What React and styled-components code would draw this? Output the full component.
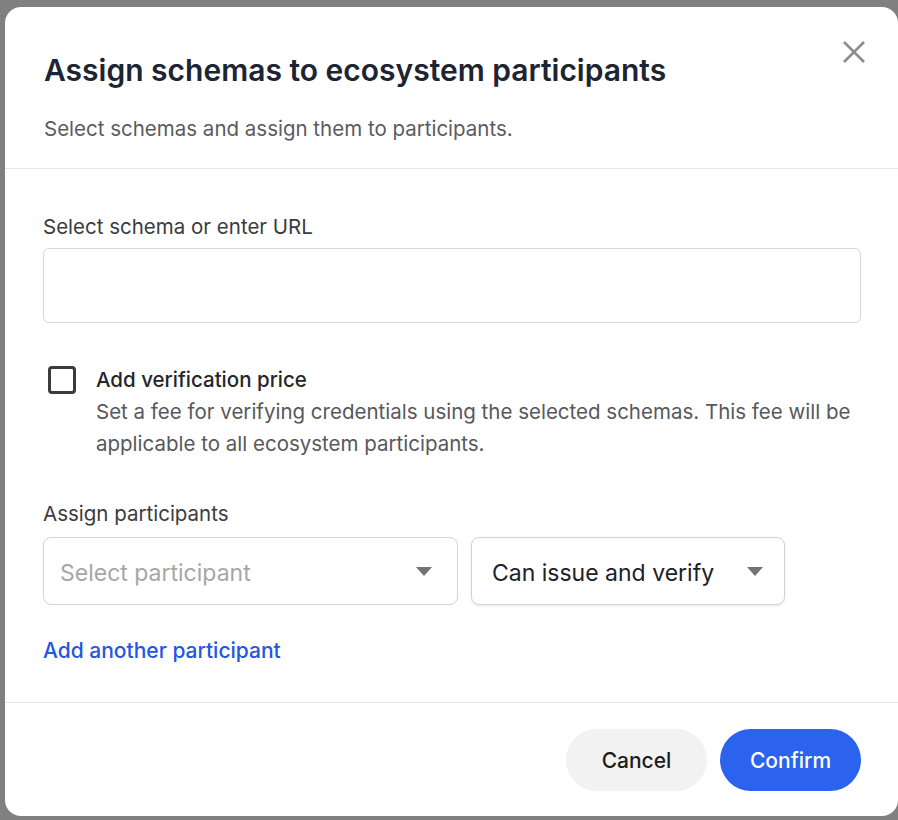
import React from "react";
import styled, { createGlobalStyle } from "styled-components";

const GlobalStyle = createGlobalStyle`
  html, body {
    margin: 0;
    padding: 0;
    background: #808080;
    font-family: Inter, "Noto Sans", sans-serif;
  }
  * {
    box-sizing: border-box;
  }
`;

const Modal = styled.div`
  position: relative;
  margin: 7px 0 0 5px;
  width: 893px;
  height: 809px;
  background: #ffffff;
  border-radius: 16px;
  display: flex;
  flex-direction: column;
  overflow: hidden;
`;

const Header = styled.div`
  padding: 45px 39px 25px;
  border-bottom: 1px solid #e6e6e6;
`;

const Title = styled.h2`
  margin: 0;
  font-size: 30px;
  line-height: 36px;
  font-weight: 600;
  color: #1d2432;
`;

const Subtitle = styled.p`
  margin: 27px 0 0;
  font-size: 20.5px;
  line-height: 28px;
  color: #5b5b5f;
`;

const CloseButton = styled.button`
  position: absolute;
  top: 33px;
  right: 32px;
  width: 24px;
  height: 24px;
  padding: 0;
  border: none;
  background: none;
  cursor: pointer;

  svg {
    display: block;
  }
`;

const Body = styled.div`
  flex: 1;
  padding: 44px 37px 0 38px;
`;

const Label = styled.div`
  font-size: 20.5px;
  line-height: 28px;
  color: #3b3b3f;
  margin-bottom: ${(p) => p.$gap}px;
`;

const TextInput = styled.input`
  display: block;
  width: 818px;
  height: 75px;
  border: 1px solid #d6d6d6;
  border-radius: 6px;
  padding: 0 16px;
  font: inherit;
  font-size: 20px;
  outline: none;
`;

const CheckRow = styled.div`
  display: flex;
  align-items: flex-start;
  gap: 20px;
  margin: 41px 0 40px 5px;
`;

const Checkbox = styled.span`
  flex: none;
  width: 28px;
  height: 28px;
  margin-top: 2px;
  border: 3px solid #3a3a40;
  border-radius: 4px;
`;

const CheckText = styled.div`
  font-size: 20.5px;
  line-height: 32px;

  strong {
    display: block;
    font-weight: 500;
    color: #26262a;
  }

  span {
    display: block;
    color: #58585c;
  }
`;

const SelectRow = styled.div`
  display: flex;
  gap: 13px;
`;

const Select = styled.div`
  display: flex;
  align-items: center;
  justify-content: space-between;
  width: ${(p) => p.$width}px;
  height: 68px;
  padding: 0 ${(p) => p.$right}px 0 ${(p) => p.$left}px;
  border: 1px solid #d4d4d4;
  border-radius: 8px;
  font-size: 23px;
  color: ${(p) => (p.$placeholder ? "#a6a6a8" : "#202126")};
  box-shadow: ${(p) => (p.$raised ? "0 1px 3px rgba(0,0,0,0.10)" : "none")};
`;

const SelectValue = styled.span`
  padding-top: 4px;
`;

const Caret = () => (
  <svg width="16" height="9" viewBox="0 0 16 9">
    <path d="M0 0 H16 L8 9 Z" fill="#737373" />
  </svg>
);

const AddLink = styled.a`
  display: inline-block;
  margin-top: 32px;
  font-size: 21px;
  line-height: 28px;
  font-weight: 500;
  color: #2256e3;
  text-decoration: none;
  cursor: pointer;
`;

const Footer = styled.div`
  display: flex;
  justify-content: flex-end;
  gap: 13px;
  padding: 26px 37px 0 0;
  height: 114px;
  border-top: 1px solid #e6e6e6;
`;

const Button = styled.button`
  width: 141px;
  height: 62px;
  border: none;
  border-radius: 31px;
  font-family: inherit;
  font-size: 21px;
  font-weight: 500;
  cursor: pointer;
  background: ${(p) => (p.$primary ? "#2b63ee" : "#f2f2f2")};
  color: ${(p) => (p.$primary ? "#ffffff" : "#1c1c1f")};
`;

export default function App() {
  return (
    <>
      <GlobalStyle />
      <Modal>
        <CloseButton aria-label="Close">
          <svg width="24" height="24" viewBox="0 0 24 24">
            <path
              d="M2 2 L22 22 M22 2 L2 22"
              stroke="#8d8d8d"
              strokeWidth="2.6"
            />
          </svg>
        </CloseButton>
        <Header>
          <Title>Assign schemas to ecosystem participants</Title>
          <Subtitle>Select schemas and assign them to participants.</Subtitle>
        </Header>
        <Body>
          <Label $gap={7}>Select schema or enter URL</Label>
          <TextInput />
          <CheckRow>
            <Checkbox />
            <CheckText>
              <strong>Add verification price</strong>
              <span>
                Set a fee for verifying credentials using the selected schemas.
                This fee will be applicable to all ecosystem participants.
              </span>
            </CheckText>
          </CheckRow>
          <Label $gap={9}>Assign participants</Label>
          <SelectRow>
            <Select $width={415} $left={16} $right={25} $placeholder>
              <SelectValue>Select participant</SelectValue>
              <Caret />
            </Select>
            <Select $width={314} $left={20} $right={21} $raised>
              <SelectValue>Can issue and verify</SelectValue>
              <Caret />
            </Select>
          </SelectRow>
          <AddLink>Add another participant</AddLink>
        </Body>
        <Footer>
          <Button>Cancel</Button>
          <Button $primary>Confirm</Button>
        </Footer>
      </Modal>
    </>
  );
}
